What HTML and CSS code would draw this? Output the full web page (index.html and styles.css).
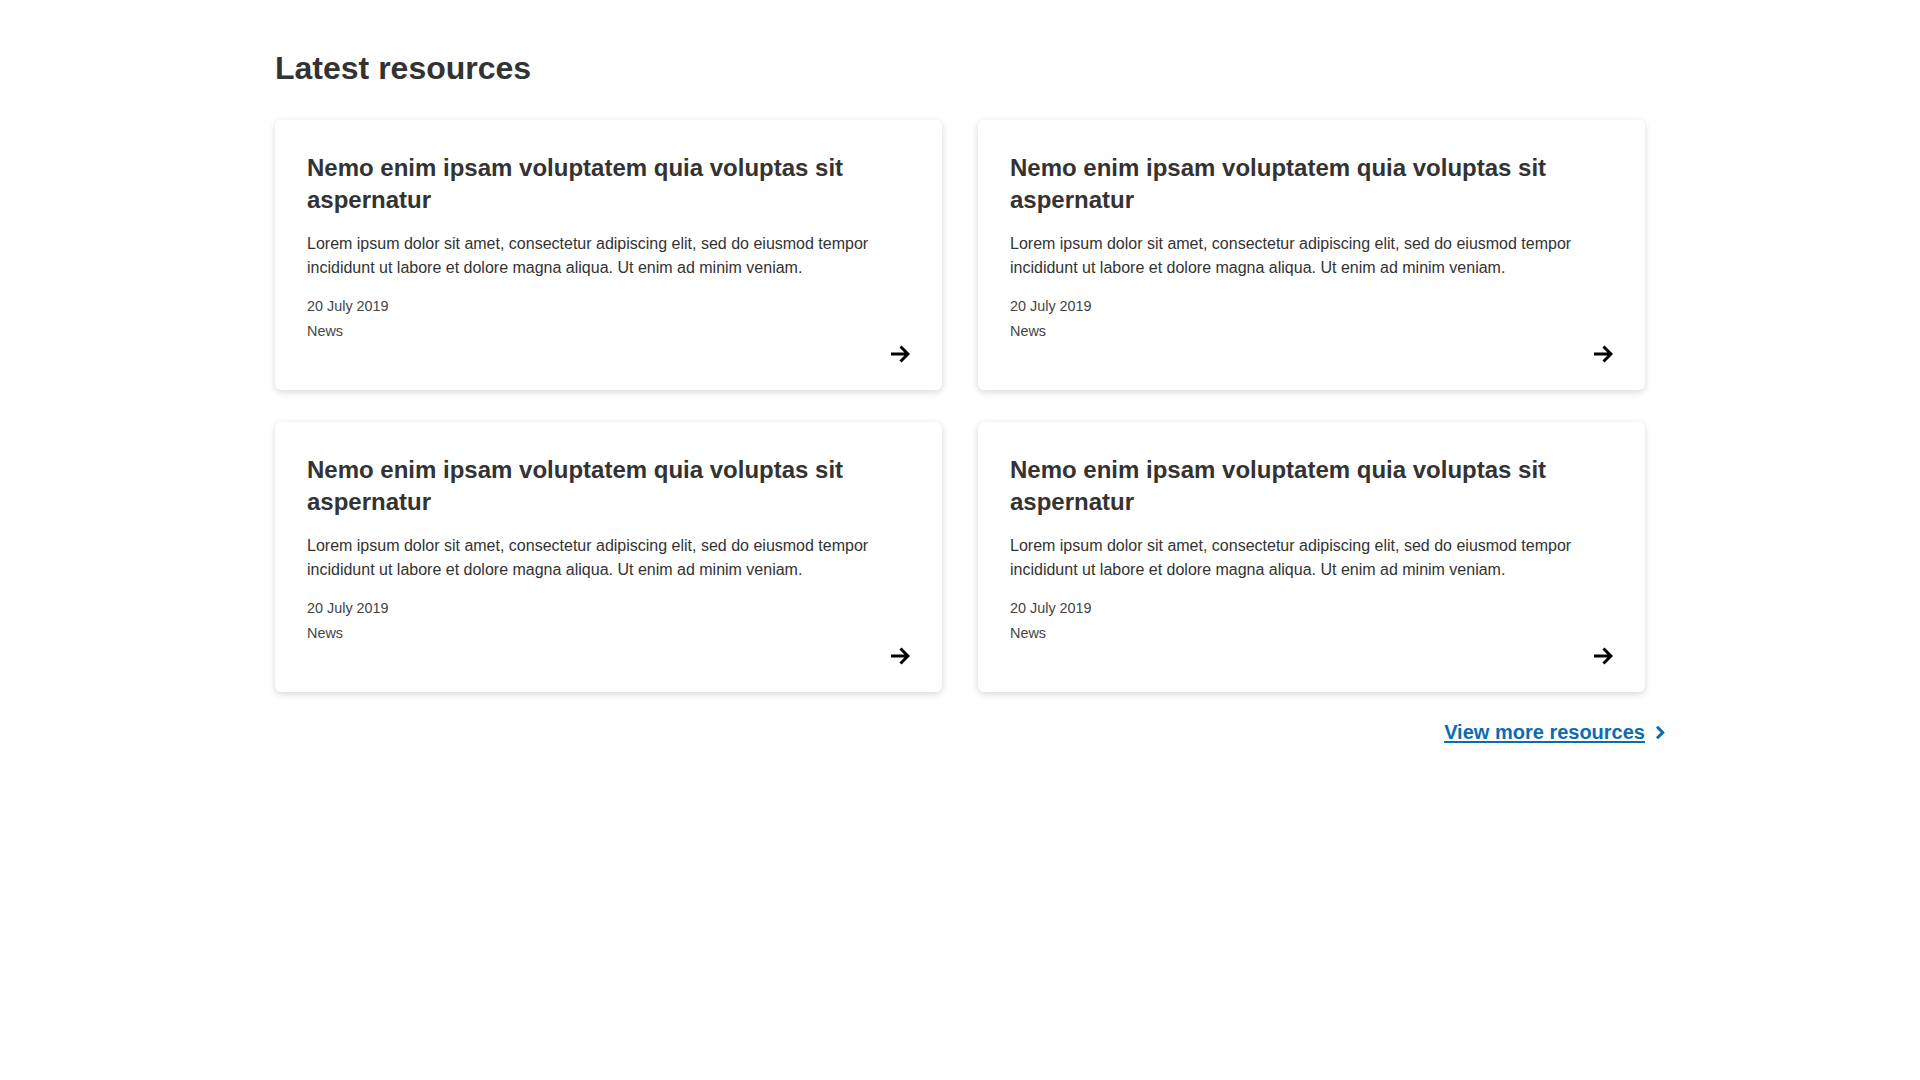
FILE: index.html
```html
<!DOCTYPE html>
<html lang="en">
<head>
<meta charset="utf-8">
<title>Latest resources</title>
<link rel="stylesheet" href="styles.css">
</head>
<body>
<main class="page">
  <h1 class="page-title">Latest resources</h1>
  <div class="grid">
    <article class="card">
      <h2 class="card-title">Nemo enim ipsam voluptatem quia voluptas sit aspernatur</h2>
      <p class="card-text">Lorem ipsum dolor sit amet, consectetur adipiscing elit, sed do eiusmod tempor incididunt ut labore et dolore magna aliqua. Ut enim ad minim veniam.</p>
      <p class="card-meta card-date">20 July 2019</p>
      <p class="card-meta">News</p>
      <div class="card-foot"><svg class="arrow" width="20" height="20" viewBox="0 0 20 20"><path d="M1 10H17.5M10.5 2.5L18 10L10.5 17.5" fill="none" stroke="#000" stroke-width="3"/></svg></div>
    </article>
    <article class="card">
      <h2 class="card-title">Nemo enim ipsam voluptatem quia voluptas sit aspernatur</h2>
      <p class="card-text">Lorem ipsum dolor sit amet, consectetur adipiscing elit, sed do eiusmod tempor incididunt ut labore et dolore magna aliqua. Ut enim ad minim veniam.</p>
      <p class="card-meta card-date">20 July 2019</p>
      <p class="card-meta">News</p>
      <div class="card-foot"><svg class="arrow" width="20" height="20" viewBox="0 0 20 20"><path d="M1 10H17.5M10.5 2.5L18 10L10.5 17.5" fill="none" stroke="#000" stroke-width="3"/></svg></div>
    </article>
    <article class="card">
      <h2 class="card-title">Nemo enim ipsam voluptatem quia voluptas sit aspernatur</h2>
      <p class="card-text">Lorem ipsum dolor sit amet, consectetur adipiscing elit, sed do eiusmod tempor incididunt ut labore et dolore magna aliqua. Ut enim ad minim veniam.</p>
      <p class="card-meta card-date">20 July 2019</p>
      <p class="card-meta">News</p>
      <div class="card-foot"><svg class="arrow" width="20" height="20" viewBox="0 0 20 20"><path d="M1 10H17.5M10.5 2.5L18 10L10.5 17.5" fill="none" stroke="#000" stroke-width="3"/></svg></div>
    </article>
    <article class="card">
      <h2 class="card-title">Nemo enim ipsam voluptatem quia voluptas sit aspernatur</h2>
      <p class="card-text">Lorem ipsum dolor sit amet, consectetur adipiscing elit, sed do eiusmod tempor incididunt ut labore et dolore magna aliqua. Ut enim ad minim veniam.</p>
      <p class="card-meta card-date">20 July 2019</p>
      <p class="card-meta">News</p>
      <div class="card-foot"><svg class="arrow" width="20" height="20" viewBox="0 0 20 20"><path d="M1 10H17.5M10.5 2.5L18 10L10.5 17.5" fill="none" stroke="#000" stroke-width="3"/></svg></div>
    </article>
  </div>
  <div class="more">
    <a class="more-link" href="#"><span class="more-text">View more resources</span><svg class="chev" width="10" height="15" viewBox="0 0 10 15"><path d="M2 1.8L7.7 7.5L2 13.2" fill="none" stroke="#0b6cb0" stroke-width="3"/></svg></a>
  </div>
</main>
</body>
</html>
```

FILE: styles.css
```css
* { box-sizing: border-box; }
html, body { margin: 0; padding: 0; background: #fff; }
body {
  font-family: "Liberation Sans", Arial, sans-serif;
  color: #333;
}
.page {
  width: 1370px;
  margin: 0 auto;
  padding-top: 48px;
}
.page-title {
  font-size: 32px;
  line-height: 40px;
  font-weight: 700;
  margin: 0 0 32px;
  color: #333;
}
.grid {
  display: grid;
  grid-template-columns: 1fr 1fr;
  column-gap: 36px;
  row-gap: 32px;
}
.card {
  background: #fff;
  border-radius: 6px;
  box-shadow: 0 2px 7px rgba(0, 0, 0, 0.16);
  padding: 32px 32px 26px;
  display: flex;
  flex-direction: column;
}
.card-title {
  font-size: 24px;
  line-height: 32px;
  font-weight: 700;
  margin: 0 0 16px;
  color: #333;
}
.card-text {
  font-size: 16px;
  line-height: 24px;
  margin: 0 0 14px;
  color: #333;
}
.card-meta {
  font-size: 14.4px;
  line-height: 24px;
  margin: 0;
  color: #444;
}
.card-date { margin-bottom: 1px; }
.card-foot {
  display: flex;
  justify-content: flex-end;
  margin-top: 1px;
}
.arrow { display: block; }
.more {
  display: flex;
  justify-content: flex-end;
  margin-top: 25px;
  margin-right: -20px;
}
.more-link {
  display: flex;
  align-items: center;
  gap: 10px;
  font-size: 20px;
  line-height: 30px;
  font-weight: 700;
  color: #0b6cb0;
  text-decoration: none;
}
.more-text {
  text-decoration: underline;
  text-underline-offset: 2px;
}
.chev { display: block; margin-top: 1px; }
```
